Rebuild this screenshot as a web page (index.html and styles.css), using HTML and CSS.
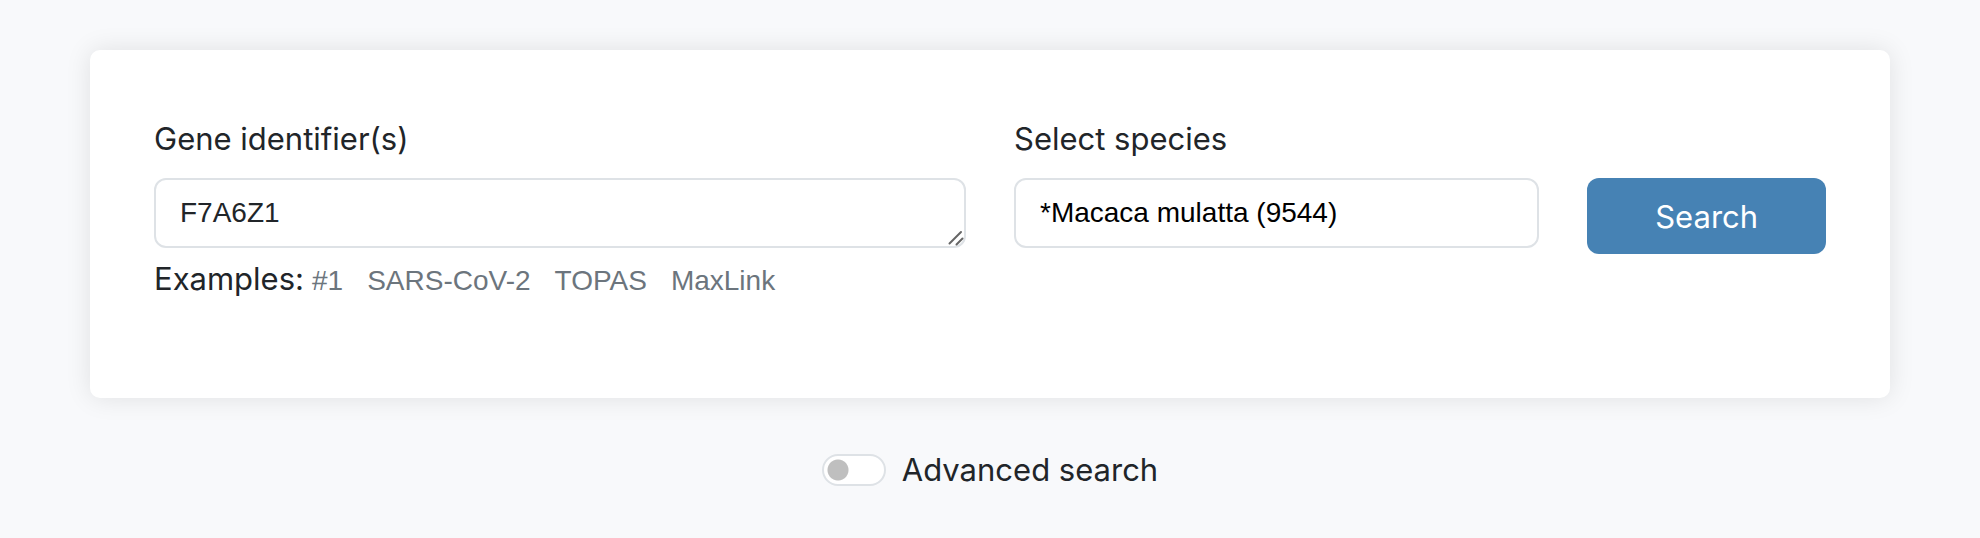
FILE: index.html
```html
<!DOCTYPE html>
<html lang="en">
<head>
<meta charset="utf-8">
<meta name="viewport" content="width=device-width, initial-scale=1">
<title>Gene search</title>
<link rel="stylesheet" href="styles.css">
</head>
<body>
<main>
  <form class="search">
    <div class="card">
      <div class="field field-genes">
        <label for="genes">Gene identifier(s)</label>
        <div class="textarea-wrap">
          <textarea id="genes" class="control" rows="1">F7A6Z1</textarea>
          <svg class="grip" viewBox="0 0 16 16" aria-hidden="true"><path d="M1.5 13.5 13 2M8.5 14.5 14.5 8.5"/></svg>
        </div>
        <div class="examples">
          <span>Examples:</span>
          <div class="links">
            <a href="#ex1">#1</a>
            <a href="#sars">SARS-CoV-2</a>
            <a href="#topas">TOPAS</a>
            <a href="#maxlink">MaxLink</a>
          </div>
        </div>
      </div>
      <div class="field field-species">
        <label for="species">Select species</label>
        <input id="species" class="control species" type="text" value="*Macaca mulatta (9544)">
      </div>
      <div class="field-submit">
        <button type="submit">Search</button>
      </div>
    </div>
    <div class="advanced">
      <input id="advanced" class="switch" type="checkbox" role="switch">
      <label for="advanced">Advanced search</label>
    </div>
  </form>
</main>
</body>
</html>
```

FILE: styles.css
```css
* {
  box-sizing: border-box;
}

body {
  margin: 0;
  background: #f8f9fb;
  color: #212529;
  font-family: Inter, "Liberation Sans", sans-serif;
  font-size: 31px;
  line-height: 50px;
}

main {
  max-width: 1800px;
  margin: 0 auto;
  padding: 50px 0 40px;
}

.card {
  display: grid;
  grid-template-columns: repeat(12, minmax(0, 1fr));
  column-gap: 48px;
  padding: 64px 64px 92px;
  background: #fff;
  border-radius: 10px;
  box-shadow: 0 0 26px rgba(0, 0, 0, 0.1);
}

.field-genes {
  grid-column: span 6;
}

.field-species {
  grid-column: span 4;
}

.field-submit {
  grid-column: span 2;
  padding-top: 64px;
}

.field label {
  display: block;
  margin-bottom: 14px;
}

.control {
  display: block;
  width: 100%;
  height: 70px;
  margin: 0;
  padding: 12px 24px;
  border: 2px solid #dee2e6;
  border-radius: 12px;
  background: #fff;
  color: #212529;
  font-family: "Liberation Sans", Arial, sans-serif;
  font-size: 28px;
  line-height: 42px;
  resize: none;
  overflow: hidden;
}

.species {
  color: #000;
}

.textarea-wrap {
  position: relative;
}

.grip {
  position: absolute;
  right: 2px;
  bottom: 2px;
  width: 16px;
  height: 16px;
  fill: none;
  stroke: #666;
  stroke-width: 2;
  stroke-linecap: round;
}

.examples {
  display: flex;
  flex-wrap: wrap;
  align-items: baseline;
  gap: 8px;
  margin-top: 6px;
}

.links {
  display: flex;
  flex-wrap: wrap;
  gap: 24px;
  font-family: "Liberation Sans", Arial, sans-serif;
  font-size: 28px;
}

.links a {
  color: #6c757d;
  text-decoration: none;
}

button {
  display: block;
  width: 100%;
  padding: 14px 24px 12px;
  border: 0;
  border-radius: 12px;
  background: #4682b4;
  color: #fff;
  font: inherit;
  cursor: pointer;
}

.advanced {
  display: flex;
  justify-content: center;
  align-items: center;
  gap: 16px;
  margin-top: 47px;
}

.switch {
  appearance: none;
  width: 64px;
  height: 32px;
  margin: 0;
  border: 2px solid #dee2e6;
  border-radius: 16px;
  background: #fff radial-gradient(circle at 14px 14px, #bfbfbf 10px, transparent 11px);
}

.switch:checked {
  background: #4682b4 radial-gradient(circle at 46px 14px, #fff 10px, transparent 11px);
}
```
